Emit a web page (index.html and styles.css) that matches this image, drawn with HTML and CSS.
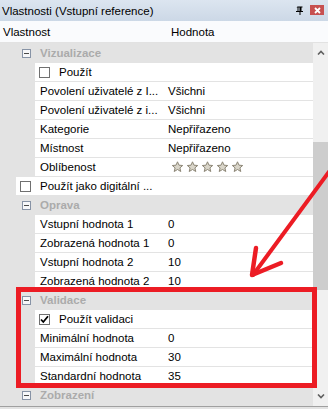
FILE: index.html
```html
<!DOCTYPE html>
<html lang="cs">
<head>
    <meta charset="UTF-8">
    <title>Vlastnosti (Vstupní reference)</title>
    <link rel="stylesheet" href="styles.css">
</head>
<body>
    <div class="window">
        <div class="titlebar">
            <span class="title">Vlastnosti (Vstupní reference)</span>
            <svg class="pin" width="8" height="9" viewBox="0 0 8 9">
                <path d="M1.5 0.5h5v1h-1v3.5h1.5v1h-7v-1h1.5v-3.5h-1z M2.5 1.5v3.5h1v-3.5z M3.5 6h1v3h-1z" fill="#000"/>
            </svg>
            <span class="close">
                <svg width="7" height="7" viewBox="0 0 7 7">
                    <path d="M1 1L6 6M6 1L1 6" stroke="#fff" stroke-width="1.8"/>
                </svg>
            </span>
        </div>

        <div class="colheader">
            <div class="col-name">Vlastnost</div>
            <div class="col-value">Hodnota</div>
        </div>

        <div class="body">
            <div class="grid">
                <!-- Vizualizace -->
                <div class="row category">
                    <div class="name"><span class="toggle"></span>Vizualizace</div>
                </div>
                <div class="row">
                    <div class="name l2"><span class="check"></span>Použít</div>
                    <div class="value"></div>
                </div>
                <div class="row">
                    <div class="name l2">Povolení uživatelé z I...</div>
                    <div class="value">Všichni</div>
                </div>
                <div class="row">
                    <div class="name l2">Povolení uživatelé z i...</div>
                    <div class="value">Všichni</div>
                </div>
                <div class="row">
                    <div class="name l2">Kategorie</div>
                    <div class="value">Nepřiřazeno</div>
                </div>
                <div class="row">
                    <div class="name l2">Místnost</div>
                    <div class="value">Nepřiřazeno</div>
                </div>
                <div class="row">
                    <div class="name l2">Oblíbenost</div>
                    <div class="value stars">
                        <svg class="star" viewBox="0 0 12 12"><path d="M6 0.8l1.5 3.4 3.7 0.3-2.8 2.4 0.9 3.6-3.3-2-3.3 2 0.9-3.6-2.8-2.4 3.7-0.3z"/></svg>
                        <svg class="star" viewBox="0 0 12 12"><path d="M6 0.8l1.5 3.4 3.7 0.3-2.8 2.4 0.9 3.6-3.3-2-3.3 2 0.9-3.6-2.8-2.4 3.7-0.3z"/></svg>
                        <svg class="star" viewBox="0 0 12 12"><path d="M6 0.8l1.5 3.4 3.7 0.3-2.8 2.4 0.9 3.6-3.3-2-3.3 2 0.9-3.6-2.8-2.4 3.7-0.3z"/></svg>
                        <svg class="star" viewBox="0 0 12 12"><path d="M6 0.8l1.5 3.4 3.7 0.3-2.8 2.4 0.9 3.6-3.3-2-3.3 2 0.9-3.6-2.8-2.4 3.7-0.3z"/></svg>
                        <svg class="star" viewBox="0 0 12 12"><path d="M6 0.8l1.5 3.4 3.7 0.3-2.8 2.4 0.9 3.6-3.3-2-3.3 2 0.9-3.6-2.8-2.4 3.7-0.3z"/></svg>
                    </div>
                </div>
                <div class="row">
                    <div class="name l1"><span class="check"></span>Použít jako digitální ...</div>
                    <div class="value"></div>
                </div>

                <!-- Oprava -->
                <div class="row category">
                    <div class="name"><span class="toggle"></span>Oprava</div>
                </div>
                <div class="row">
                    <div class="name l2">Vstupní hodnota 1</div>
                    <div class="value">0</div>
                </div>
                <div class="row">
                    <div class="name l2">Zobrazená hodnota 1</div>
                    <div class="value">0</div>
                </div>
                <div class="row">
                    <div class="name l2">Vstupní hodnota 2</div>
                    <div class="value">10</div>
                </div>
                <div class="row">
                    <div class="name l2">Zobrazená hodnota 2</div>
                    <div class="value">10</div>
                </div>

                <!-- Validace -->
                <div class="row category">
                    <div class="name"><span class="toggle"></span>Validace</div>
                </div>
                <div class="row">
                    <div class="name l2"><span class="check checked">
                        <svg width="9" height="9" viewBox="0 0 9 9"><path d="M1 4.5L3.3 7 8 1.3" fill="none" stroke="#000" stroke-width="1.8"/></svg>
                    </span>Použít validaci</div>
                    <div class="value"></div>
                </div>
                <div class="row">
                    <div class="name l2">Minimální hodnota</div>
                    <div class="value">0</div>
                </div>
                <div class="row">
                    <div class="name l2">Maximální hodnota</div>
                    <div class="value">30</div>
                </div>
                <div class="row">
                    <div class="name l2">Standardní hodnota</div>
                    <div class="value">35</div>
                </div>

                <!-- Zobrazení -->
                <div class="row category">
                    <div class="name"><span class="toggle"></span>Zobrazení</div>
                </div>
            </div>

            <div class="scrollbar">
                <svg class="arrow" width="8" height="5" viewBox="0 0 8 5"><path d="M1 4.5L4 1.5 7 4.5" fill="none" stroke="#606060" stroke-width="1.6"/></svg>
                <div class="track"><div class="thumb"></div></div>
                <svg class="arrow" width="8" height="5" viewBox="0 0 8 5"><path d="M1 0.5L4 3.5 7 0.5" fill="none" stroke="#606060" stroke-width="1.6"/></svg>
            </div>
        </div>

        <div class="bottom"></div>

        <!-- red annotation drawn over the grid -->
        <svg class="annotation" width="328" height="409" viewBox="0 0 328 409">
            <rect x="18.5" y="289.5" width="296" height="96" fill="none" stroke="#ec1c24" stroke-width="5"/>
            <path d="M345 150L253 275" stroke="#ec1c24" stroke-width="4" stroke-linecap="round" fill="none"/>
            <path d="M256 248L252 275 281 263" stroke="#ec1c24" stroke-width="4.5" stroke-linecap="round" stroke-linejoin="round" fill="none"/>
        </svg>
    </div>
</body>
</html>
```

FILE: styles.css
```css
body {
    margin: 0;
    padding: 0;
    background: #fff;
}

.window {
    position: relative;
    width: 328px;
    height: 409px;
    overflow: hidden;
    font-family: "Liberation Sans", Arial, sans-serif;
    font-size: 11.5px;
    color: #000;
    background: #e3e3e3;
}

.titlebar {
    height: 21px;
    display: flex;
    align-items: center;
    padding-left: 2px;
    background: linear-gradient(#dce5f0, #ccd8e6);
}

.title {
    flex: 1;
}

.pin {
    margin-right: 6px;
    margin-top: -1px;
}

.close {
    width: 14px;
    height: 10px;
    margin-right: 4px;
    margin-top: -1px;
    background: #c75050;
    display: flex;
    align-items: center;
    justify-content: center;
}

.colheader {
    height: 21px;
    display: flex;
    align-items: center;
    background: #fafbfd;
    border-bottom: 1px solid #e2e2e2;
}

.col-name {
    width: 164px;
    padding-left: 3px;
    box-sizing: border-box;
}

.col-value {
    padding-left: 7px;
}

.body {
    display: flex;
    height: 362px;
}

.grid {
    width: 313px;
    padding-top: 1px;
    display: flex;
    flex-direction: column;
    gap: 1px;
}

.row {
    height: 18px;
    display: flex;
}

.name,
.value {
    display: flex;
    align-items: center;
    box-sizing: border-box;
    white-space: nowrap;
    overflow: hidden;
    flex-shrink: 0;
}

.name {
    width: 164px;
}

.name.l1 {
    width: 148px;
    margin-left: 16px;
    padding-left: 4px;
    background: #fff;
}

.name.l2 {
    width: 129px;
    margin-left: 35px;
    padding-left: 5px;
    background: #fff;
}

.value {
    width: 149px;
    padding-left: 4px;
    background: #fff;
}

.category .name {
    width: 313px;
    padding-left: 22px;
    font-weight: bold;
    color: #ababab;
}

.toggle {
    position: relative;
    width: 9px;
    height: 9px;
    margin-right: 9px;
    box-sizing: border-box;
    border: 1px solid #8793a6;
    background: #f6f7f9;
}

.toggle::after {
    content: "";
    position: absolute;
    left: 1px;
    top: 3px;
    width: 5px;
    height: 1px;
    background: #4a4a4a;
}

.check {
    width: 11px;
    height: 11px;
    margin-right: 9px;
    box-sizing: border-box;
    border: 1px solid #707070;
    background: #fff;
    display: flex;
    align-items: center;
    justify-content: center;
}

.name.l2 .check {
    margin-left: -1px;
}

.stars {
    padding-left: 7px;
    gap: 2px;
}

.star {
    width: 13px;
    height: 12px;
    fill: #d9d5c9;
    stroke: #8c8676;
    stroke-width: 1;
}

.scrollbar {
    width: 15px;
    height: 363px;
    background: #f0f0f0;
    display: flex;
    flex-direction: column;
    align-items: center;
}

.scrollbar .arrow {
    margin: 7px 0;
}

.track {
    flex: 1;
    width: 100%;
}

.thumb {
    margin-top: 80px;
    height: 148px;
    background: #cdcdcd;
}

.bottom {
    margin-top: 1px;
    height: 1px;
    background: #a0a0a0;
}

.annotation {
    position: absolute;
    left: 0;
    top: 0;
}
```
